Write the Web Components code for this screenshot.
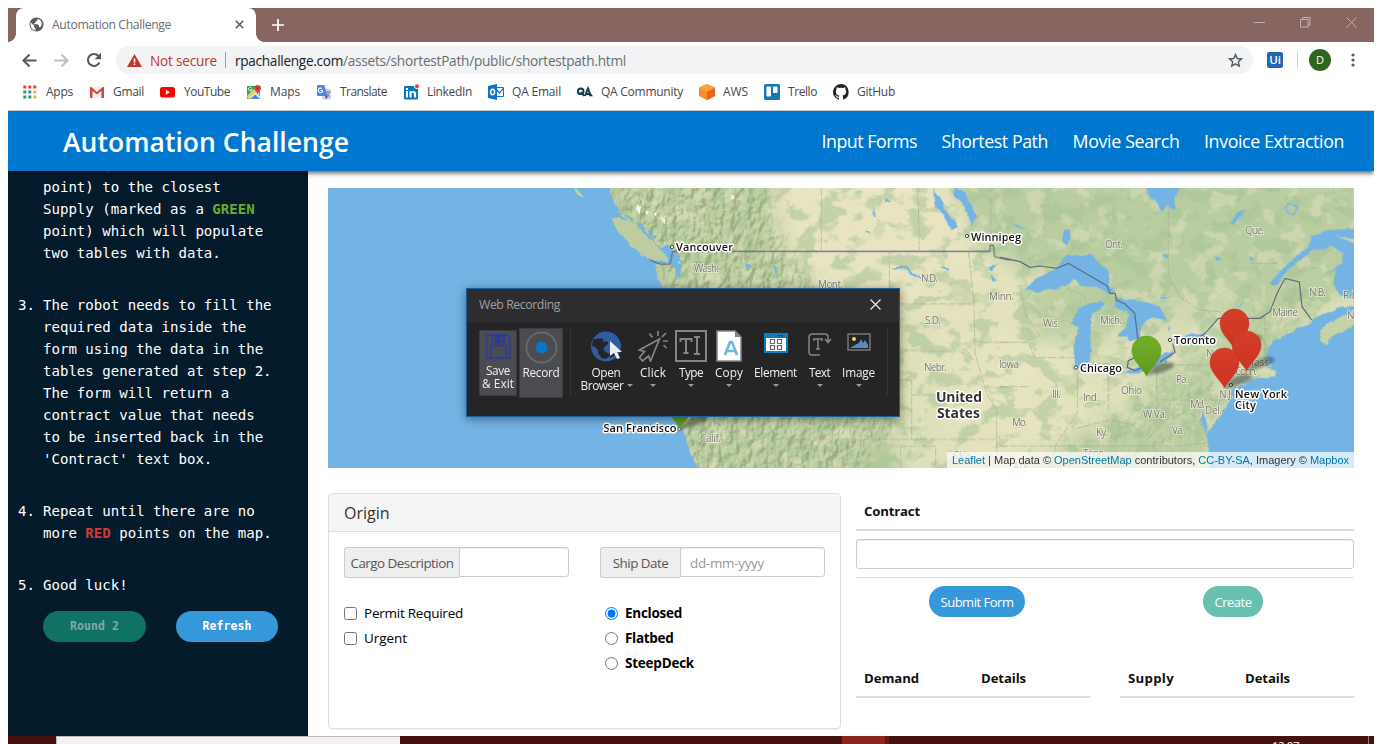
<!DOCTYPE html>
<html lang="en">
<head>
<meta charset="utf-8">
<title>Automation Challenge</title>
<style>
html,body{margin:0;height:744px;overflow:hidden;background:#fff}
body{font-family:"Open Sans","Noto Sans",sans-serif;font-size:13px;color:#000}
</style>
</head>
<body>
<browser-window></browser-window>
<script>
const fitted = [];
function define(name, html) {
  const tpl = document.createElement('template');
  tpl.innerHTML = html;
  customElements.define(name, class extends HTMLElement {
    constructor() {
      super();
      this.attachShadow({mode: 'open'}).appendChild(tpl.content.cloneNode(true));
    }
  });
}

/* A single line of text tracked to a fixed width. */
customElements.define('fit-text', class extends HTMLElement {
  constructor() {
    super();
    this.attachShadow({mode: 'open'}).innerHTML =
      '<style>:host{display:inline-block;white-space:pre;flex:none}</style><span><slot></slot></span>';
    fitted.push(this);
  }
  fit() {
    const w = parseFloat(this.getAttribute('w'));
    const natural = this.shadowRoot.querySelector('span').getBoundingClientRect().width;
    this.style.letterSpacing = ((w - natural) / this.textContent.length) + 'px';
    this.style.width = w + 'px';
  }
});

define('tab-strip', `
<style>
:host{display:flex;height:34px;background:#876560;align-items:stretch;justify-content:space-between}
.left{display:flex}
.tab{display:flex;align-items:center;width:240px;margin-left:8px;background:#fff;border-radius:8px 8px 0 0;color:#6a6d70;font-size:12.200px;box-sizing:border-box;padding:0 0 1px 12px}
.globe{margin-right:8px;margin-left:1px}
.x{margin-left:64px}
.corner{align-self:flex-end;width:8px;height:8px;background:radial-gradient(circle at 100% 0,#876560 7.5px,#fff 8px)}
.cornerl{position:absolute;left:8px;top:34px;width:8px;height:8px;background:radial-gradient(circle at 0 0,#876560 7.5px,#fff 8px)}
.plus{align-self:center;margin-left:8px}
.win{display:flex;gap:35px;padding:9px 17px 0 0}
</style>
<div class="cornerl"></div>
<div class="left">
 <div class="tab">
  <svg class="globe" width="15" height="15" viewBox="0 0 15 15"><circle cx="7.5" cy="7.5" r="7" fill="#56595d"/><path d="M1.5 5.2 5 8.5v1.3l1.5 1.4v2.3C3 13 1.400 10.500 1.500 5.200zM7.500 1.900c1.500.2 1.700.9.800 1.600l-1.900 1.200v1.300H5.200v1.200h3.600l1.200 1.500v1.500h1.200c.8-.9 1.400-1.900 1.500-3.200.1-2.500-1.300-4.300-3.400-5z" fill="#fff"/></svg>
  <fit-text w="119">Automation Challenge</fit-text>
  <svg class="x" width="9" height="9" viewBox="0 0 9 9"><path d="M.8.8l7.400 7.400M8.200.8L.8 8.200" stroke="#5a5d61" stroke-width="1.600"/></svg>
 </div>
 <div class="corner"></div>
 <svg class="plus" width="12" height="12" viewBox="0 0 12 12"><path d="M6 0v12M0 6h12" stroke="#fff" stroke-width="1.700"/></svg>
</div>
<div class="win">
 <svg width="11" height="11"><path d="M0 5.500h11" stroke="#c3b1af"/></svg>
 <svg width="11" height="11"><path d="M.5 2.500h7.500v7.500H.5zM2.500 2.500V.5h7.500V8H8" fill="none" stroke="#c3b1af"/></svg>
 <svg width="11" height="11"><path d="M.5.5l10 10M10.500.5l-10 10" stroke="#c3b1af" fill="none"/></svg>
</div>`);

define('address-bar', `
<style>
:host{display:flex;height:36px;align-items:center;background:#fff;padding-left:14px;box-sizing:border-box}
.nav{margin-right:17px;flex:none}
.pill{display:flex;align-items:center;width:1137px;height:28px;box-sizing:border-box;border-radius:14px;background:#f1f3f4;padding:0 11px;margin-left:-3px;font-size:13.600px;color:#6b6e72}
.bad{color:#c5352d;margin-left:8px}
.rule{width:1px;height:16px;background:#9a9da1;margin:0 9px 0 8px}
.dark{color:#202124}
.star{margin-left:auto;margin-right:-1px}
.ui{width:16px;height:16px;border-radius:2px;background:#2467b0;color:#fff;font-size:11.500px;font-weight:600;line-height:16px;text-align:center;margin-left:14px}
.sep{width:1px;height:16px;background:#ced0d2;margin:0 11px 0 14px}
.avatar{width:22px;height:22px;border-radius:50%;background:#2f661b;color:#fff;text-align:center;font-size:11px;line-height:22px}
.dots{margin-left:20px}
</style>
<svg class="nav" width="15" height="15" viewBox="0 0 15 15"><path d="M14.500 7.500H2M7.500 1.500l-6 6 6 6" fill="none" stroke="#55585c" stroke-width="2"/></svg>
<svg class="nav" width="15" height="15" viewBox="0 0 15 15"><path d="M.5 7.500H13M7.500 1.500l6 6-6 6" fill="none" stroke="#bcbec0" stroke-width="2"/></svg>
<svg class="nav" width="16" height="16" viewBox="0 0 16 16"><path d="M13.400 10.500A6 6 0 1 1 12.500 4" fill="none" stroke="#55585c" stroke-width="2"/><path d="M15 .8v6.400H8.600z" fill="#55585c"/></svg>
<div class="pill">
 <svg width="15" height="13" viewBox="0 0 15 13"><path d="M7.500 0L15 13H0z" fill="#c5352d"/><path d="M7.500 4.500v4M7.500 9.500v1.600" stroke="#fff" stroke-width="1.600"/></svg>
 <fit-text class="bad" w="67">Not secure</fit-text>
 <span class="rule"></span>
 <fit-text class="dark" w="108">rpachallenge.com</fit-text><fit-text w="283">/assets/shortestPath/public/shortestpath.html</fit-text>
 <svg class="star" width="15" height="15" viewBox="0 0 15 15"><path d="M7.500 1.500l1.700 4 4.400.4-3.300 2.900 1 4.300-3.800-2.300-3.800 2.300 1-4.300-3.300-2.900 4.400-.4z" fill="none" stroke="#55585c" stroke-width="1.400"/></svg>
</div>
<div class="ui">Ui</div><div class="sep"></div><div class="avatar">D</div>
<svg class="dots" width="4" height="14"><g fill="#55585c"><circle cx="2" cy="2" r="1.600"/><circle cx="2" cy="7" r="1.600"/><circle cx="2" cy="12" r="1.600"/></g></svg>`);

define('bookmark-item', `
<style>:host{display:flex;align-items:center;gap:8px;color:#45484c;font-size:12px;flex:none}
::slotted(svg){display:block;width:16px;height:16px;flex:none}</style><slot></slot>`);

define('bookmark-bar', `
<style>:host{display:flex;height:33px;box-sizing:border-box;padding:0 0 5px 14px;gap:16px;align-items:center;border-bottom:1px solid #c9ccce;background:#fff}</style>
<bookmark-item><svg viewBox="0 0 16 16"><path d="M1.300 1.500h3v3h-3zM6.300 1.500h3v3h-3zM11.300 1.500h3v3h-3z" fill="#e5432f"/><path d="M1.300 6.500h3v3h-3zM1.300 11.500h3v3h-3zM6.300 11.500h3v3h-3z" fill="#2f9e5b"/><path d="M6.300 6.500h3v3h-3z" fill="#2b85ea"/><path d="M11.300 6.500h3v3h-3zM11.300 11.500h3v3h-3z" fill="#f6b32c"/></svg><fit-text w="27">Apps</fit-text></bookmark-item>
<bookmark-item><svg viewBox="0 0 16 16"><path d="M1 3h14v11H1z" fill="#eee"/><path d="M1 14V3h1.200L8 8l5.800-5H15v11h-2.500V6.800L8 10.500 3.500 6.800V14z" fill="#d6453a"/></svg><fit-text w="31">Gmail</fit-text></bookmark-item>
<bookmark-item><svg viewBox="0 0 16 16"><rect x="0" y="3" width="15" height="10.500" rx="2.500" fill="#f00"/><path d="M5.800 5.800v5l4-2.500z" fill="#fff"/></svg><fit-text w="46">YouTube</fit-text></bookmark-item>
<bookmark-item><svg viewBox="0 0 16 16"><rect x="1" y="2" width="13" height="13" rx="1" fill="#34a45a"/><path d="M2 14.500L12 5l2 8.500-1 1.500z" fill="#dfe3e6"/><path d="M4.500 15L9 10.500l4.500 4.500z" fill="#4285f4"/><path d="M1 12L11 2l2 2L2 15z" fill="#fbd04b"/><path d="M1 2h9L1 11z" fill="#34a45a"/><path d="M6 5.500A1.800 1.800 0 1 1 5.300 3.600M4.500 5.300H6" fill="none" stroke="#fff" stroke-width=".9"/><path d="M11.600 1a3.400 3.400 0 0 1 3.400 3.400c0 2-2.900 3.300-3.400 6.600-.4-3.300-3.400-4.600-3.400-6.600A3.400 3.400 0 0 1 11.600 1z" fill="#df4435"/><circle cx="11.600" cy="4.300" r="1.100" fill="#8c211b"/></svg><fit-text w="30">Maps</fit-text></bookmark-item>
<bookmark-item><svg viewBox="0 0 16 16"><rect x="6" y="5" width="9" height="10.500" rx="1" fill="#d2d5da"/><path d="M1.500 1h6.800l3.200 11H2a1 1 0 0 1-1-1V1.500z" fill="#4a86e2"/><path d="M9 12h3l-2 3.500z" fill="#3463b8"/><path d="M6.800 6.800A2.300 2.300 0 1 1 6 4.600M4.600 6.600h2.200" fill="none" stroke="#fff" stroke-width="1.100"/><path d="M9.800 8h4.500M12 7v1M13.500 8c-.5 2-1.500 3.500-2.300 4M10.800 9.500l3 3.500" stroke="#778088" fill="none"/></svg><fit-text w="47">Translate</fit-text></bookmark-item>
<bookmark-item><svg viewBox="0 0 16 16"><rect x="1" y="2" width="14" height="13.500" rx="1" fill="#0877b5"/><path d="M3 7h2v6.500H3zM3 4h2v2H3zM6.500 7h2v1c1.300-1.800 4.600-1.500 4.600 1.600v3.900H11V10c0-1.800-2.400-1.700-2.400 0v3.500H6.500z" fill="#fff"/><circle cx="14" cy="2.200" r="2.700" fill="#fff"/><circle cx="14" cy="2.200" r="2" fill="#e8403a"/></svg><fit-text w="45">LinkedIn</fit-text></bookmark-item>
<bookmark-item><svg viewBox="0 0 16 16"><path d="M0 2l9-2v16l-9-2z" fill="#0b70c9"/><path d="M9 3.500h6.500v9H9" fill="#fff" stroke="#0b70c9"/><path d="M9 6l2.500 3L15 4.500" fill="none" stroke="#0b70c9" stroke-width="1.200"/><ellipse cx="4.600" cy="8" rx="2" ry="2.700" fill="none" stroke="#fff" stroke-width="1.500"/></svg><fit-text w="49">QA Email</fit-text></bookmark-item>
<bookmark-item><svg viewBox="0 0 16 16"><circle cx="3.700" cy="7.300" r="2.800" fill="none" stroke="#123e50" stroke-width="2"/><path d="M4 8l3 4M8 12l3-7.500 2.300 6M9 10h5" fill="none" stroke="#123e50" stroke-width="2"/><path d="M12.500 7.500l3.500 4.700h-4z" fill="#123e50"/></svg><fit-text w="82">QA Community</fit-text></bookmark-item>
<bookmark-item><svg viewBox="0 0 16 16"><path d="M8 0l8 3.500v8.500L8 16l-8-4V3.500z" fill="#f68d2a"/><path d="M8 7.500l8-4V12l-8 4z" fill="#e9641f"/><path d="M0 3.500L8 0l8 3.500-8 4z" fill="#fba23e"/></svg><fit-text w="25">AWS</fit-text></bookmark-item>
<bookmark-item><svg viewBox="0 0 16 16"><rect width="16" height="16" rx="1.500" fill="#1577b4"/><rect x="2.400" y="2.400" width="4.600" height="10" rx=".8" fill="#fff"/><rect x="9" y="2.400" width="4.600" height="6.700" rx=".8" fill="#fff"/></svg><fit-text w="29">Trello</fit-text></bookmark-item>
<bookmark-item><svg viewBox="0 0 16 16"><path fill="#20242a" d="M8 0a8 8 0 0 0-2.500 15.600c.4.100.5-.2.500-.4v-1.500c-2.200.5-2.700-1-2.700-1-.4-.9-.9-1.200-.9-1.200-.7-.5.100-.5.100-.5.800.1 1.200.8 1.200.8.700 1.300 1.900.9 2.300.7.100-.5.300-.9.500-1.100-1.800-.2-3.600-.9-3.600-4 0-.9.300-1.600.8-2.100-.1-.2-.4-1 .1-2.100 0 0 .7-.2 2.200.8a7.600 7.600 0 0 1 4 0c1.500-1 2.200-.8 2.200-.8.4 1.100.2 1.900.1 2.100.5.600.8 1.300.8 2.100 0 3.100-1.900 3.700-3.700 3.900.3.300.6.800.6 1.500v2.200c0 .2.100.5.600.4A8 8 0 0 0 8 0z"/></svg><fit-text w="38">GitHub</fit-text></bookmark-item>`);

define('site-header', `
<style>
:host{display:flex;height:60px;background:#0077cf;color:#fff;align-items:center;justify-content:space-between;padding:0 30px 0 55px;box-shadow:0 2px 5px rgba(0,0,0,.65);position:relative;z-index:2;clip-path:inset(0 0 -10px 0)}
h1{margin:0;font-size:26.500px;font-weight:600;line-height:60px;padding-top:1px}
nav{display:flex;gap:24.500px;font-size:17.800px}
</style>
<h1><fit-text w="286">Automation Challenge</fit-text></h1>
<nav><fit-text w="95.500">Input Forms</fit-text><fit-text w="106.500">Shortest Path</fit-text><fit-text w="107">Movie Search</fit-text><fit-text w="140">Invoice Extraction</fit-text></nav>`);

define('round-button', `
<style>:host{display:flex;align-items:center;justify-content:center;height:31px;border-radius:16px;background:var(--bg,#3498db);color:var(--fg,#fff);flex:none;box-sizing:border-box}</style><slot></slot>`);

define('step-item', `
<style>:host{display:grid;grid-template-columns:25px 1fr;line-height:22px;margin-bottom:30px}
.b{white-space:pre}</style><div><slot name="n"></slot></div><div class="b"><slot></slot></div>`);

define('instruction-panel', `
<style>
:host{display:block;width:300px;box-sizing:border-box;padding-left:10px;background:#041b2c;color:#fff;font:14.070px "DejaVu Sans Mono","Liberation Mono",monospace;overflow:hidden;flex:none}
.list{margin-top:-17px}
b{line-height:1}
b.g{color:#6bac26}b.r{color:#d53a31}
.btns{display:flex;gap:30px;margin:-15.500px 0 0 25px;font-size:11.500px;font-weight:700}
</style>
<div class="list">
<step-item><span slot="n"></span>Demand (marked as a RED
point) to the closest
Supply (marked as a <b class="g">GREEN</b>
point) which will populate
two tables with data.</step-item>
<step-item><span slot="n">3.</span>The robot needs to fill the
required data inside the
form using the data in the
tables generated at step 2.
The form will return a
contract value that needs
to be inserted back in the
'Contract' text box.</step-item>
<step-item><span slot="n">4.</span>Repeat until there are no
more <b class="r">RED</b> points on the map.</step-item>
<step-item><span slot="n">5.</span>Good luck!</step-item>
<div class="btns"><round-button style="width:103px;--bg:#107264;--fg:#85a9a8"><fit-text w="49">Round 2</fit-text></round-button><round-button style="width:102px"><fit-text w="49">Refresh</fit-text></round-button></div>
</div>`);

define('route-map', `
<style>
:host{display:block;width:1026px;height:280px;position:relative;overflow:hidden;background:#73b4e5}
svg{display:block}
.lake{fill:#73b4e5}
.state{fill:none;stroke:#a5ab98;stroke-width:2.500;stroke-dasharray:24 5;opacity:.75}
.edge{fill:none;stroke:#626c76;stroke-width:3.600}
.s{fill:#7e7b76;stroke:#eeefdc;stroke-width:2px;stroke-opacity:.65;paint-order:stroke;font-size:10px}
.c{fill:#111;stroke:#fff;stroke-width:3px;paint-order:stroke;font-size:11px;font-weight:600;stroke-linejoin:round}
.big{font-size:14px;font-weight:700;fill:#333}
.attr{position:absolute;right:0;bottom:0;height:16px;width:407px;box-sizing:border-box;padding-left:5px;background:rgba(255,255,255,.7);font:11px/16px "Liberation Sans",Arial,sans-serif;color:#333;white-space:pre}
.attr i{font-style:normal;color:#0078a8}
</style>
<svg width="1026" height="280" viewBox="0 0 1026 280" font-family="'Open Sans','Noto Sans',sans-serif">
<defs>
 <filter id="patch" x="0" y="0" width="100%" height="100%" color-interpolation-filters="sRGB"><feTurbulence type="fractalNoise" baseFrequency=".045 .06" numOctaves="4" seed="8"/><feColorMatrix values="0 0 0 0 .66  0 0 0 0 .77  0 0 0 0 .59  9 0 0 0 -4.500"/></filter>
 <filter id="patch2" x="0" y="0" width="100%" height="100%" color-interpolation-filters="sRGB"><feTurbulence type="fractalNoise" baseFrequency=".05" numOctaves="4" seed="31"/><feColorMatrix values="0 0 0 0 .91  0 0 0 0 .89  0 0 0 0 .76  9 0 0 0 -5"/></filter>
 <filter id="shade" x="0" y="0" width="100%" height="100%" color-interpolation-filters="sRGB"><feTurbulence type="fractalNoise" baseFrequency=".13 .09" numOctaves="3" seed="4"/><feDiffuseLighting surfaceScale="4" lighting-color="#fff"><feDistantLight azimuth="225" elevation="48"/></feDiffuseLighting><feColorMatrix values="0 0 0 0 .5  0 0 0 0 .56  0 0 0 0 .38  -2.200 0 0 0 1.560"/></filter>
 <filter id="shine" x="0" y="0" width="100%" height="100%" color-interpolation-filters="sRGB"><feTurbulence type="fractalNoise" baseFrequency=".13 .09" numOctaves="3" seed="4"/><feDiffuseLighting surfaceScale="4" lighting-color="#fff"><feDistantLight azimuth="225" elevation="48"/></feDiffuseLighting><feColorMatrix values="0 0 0 0 .93  0 0 0 0 .92  0 0 0 0 .79  4 0 0 0 -3.100"/></filter>
 <filter id="soft" x="-20%" y="-20%" width="140%" height="140%"><feGaussianBlur stdDeviation="9"/></filter>
 <filter id="rough" x="-5%" y="-5%" width="110%" height="110%"><feTurbulence type="fractalNoise" baseFrequency=".12" numOctaves="2" seed="2"/><feDisplacementMap in="SourceGraphic" scale="5" xChannelSelector="R" yChannelSelector="G"/></filter>
 <filter id="blur2" x="-50%" y="-50%" width="200%" height="200%"><feGaussianBlur stdDeviation="1.500"/></filter>
 <mask id="hills"><g filter="url(#soft)" fill="#fff"><path d="M270-20H430L455 60 500 110 560 160 570 230 520 300H340L330 90z"/><path d="M820 300L770 250 860 190 920 130 990 90 980 130 900 190 880 240z" opacity=".3"/></g></mask>
 <linearGradient id="gr" x2="0" y2="1"><stop offset="0" stop-color="#72af28"/><stop offset="1" stop-color="#5f9a1c"/></linearGradient>
 <linearGradient id="rd" x2="0" y2="1"><stop offset="0" stop-color="#d63e2a"/><stop offset="1" stop-color="#cb3422"/></linearGradient>
 <path id="pin" d="M0 0C-3-7-14.500-15-14.500-25.500a14.500 14.500 0 0 1 29 0C14.500-15 3-7 0 0z"/>
 <path id="sh" d="M0 0C4-9 18-17 27-13 32-8 14-3 0 0z" fill="#222" opacity=".42" filter="url(#blur2)"/>
</defs>
<rect width="1026" height="280" fill="#dde0ba"/>
<g filter="url(#soft)">
 <path d="M260-20H430L470 60 500 130 480 190 560 210 580 300H340z" fill="#b9cc9f"/>
 <path d="M435-10H620L660 50 700 70 690 200 640 170 560 100 470 90z" fill="#e8e4c1"/>
 <path d="M600 80H700V290H620z" fill="#e3e2bd"/>
 <path d="M620-10H1040V100L890 130 760 150 730 100 650 60z" fill="#b9cda1"/>
 <path d="M670 150L740 170 760 240 690 250 650 200z" fill="#e7e4c1"/>
 <path d="M700 100H750V150H700zM770 230L890 150 1000 60 1000 110 890 230 880 290 700 290z" fill="#bccfa2"/>
 <path d="M800 140L850 130 900 110 905 100 840 120 800 150M700 195H800V225H700z" fill="#e2e2bb"/>
</g>
<rect width="1026" height="280" filter="url(#patch)" opacity=".55"/>
<rect width="1026" height="280" filter="url(#patch2)" opacity=".45"/>
<g mask="url(#hills)"><rect width="1026" height="280" filter="url(#shade)" opacity=".5"/><rect width="1026" height="280" filter="url(#shine)" opacity=".4"/></g>
<g fill="#f6f7f2" filter="url(#rough)"><path d="M309 17l5 3-1 5-5-2zM327 24l3 3-2 3zM335 29l4 4-3 2zM402 5l5 3-3 2zM317 21l3 2-2 3z"/></g>
<g filter="url(#rough)">
 <path class="lake" d="M-10-10H277L286 14 291 25 302 34 317 42 325 52 333 60 341 57 347 66 352 78 351 92 347 80 342 75 327 75 330 90 336 104 330 180 340 226 352 240 358 252 363 265 374 290H-10z"/>
 <path d="M284 32L290 29 306 35 320 50 330 58 340 70 340 75 328 72 314 67 303 58 290 44z" fill="#bdcda1"/>
 <path d="M245-2L255 9 251 8 243-2z" fill="#c9d5a8"/>
 <path d="M321 42l7 8M310 35l7 7M297 27l7 5M345 64l8 9" fill="none" stroke="#73b4e5" stroke-width="2.500"/>
 <g transform="translate(332 -8) scale(.33333)" class="lake">
  <path d="M885 18L920 40 935 80 950 110 937 144 927 112 905 62 880 45zM820 18L835 50 860 90 897 145 873 150 850 105 822 70zM672 55l20 6-20 6zM615 152l12 2-2 8zM985 262l28-10-20 20zM990 280l18 20-10 10zM258 250l15 5-12 20zM340 262l8 0 0 25-6-6zM170 730l14 4-8 8z"/>
  <path d="M700 266l42-8 10 24 34 10M850 262l16 4M640 90l5 20" fill="none" stroke="#73b4e5" stroke-width="6"/>
 </g>
 <g transform="translate(672 -8) scale(.33333)" class="lake">
  <path d="M430 10L455 55 492 98 500 75 525 92 520 60 542 15z"/>
  <path d="M75 330L110 292 165 268 200 228 272 225 325 272 330 320 345 338 320 340 285 320 245 318 225 300 170 325 120 337z"/>
  <path d="M240 382L300 362 318 372 275 402 275 440 270 540 255 572 225 558 220 500 236 440 214 428z"/>
  <path d="M345 355L430 362 485 382 497 422 460 408 430 432 416 478 395 482 380 470 352 470 378 440 385 400 345 376z"/>
  <path d="M372 576L405 562 470 530 527 512 500 540 450 572 400 585z"/>
  <path d="M518 478L570 462 622 464 600 482 540 488z"/>
  <path d="M482 347l28 4-26 5zM190 150l18-2 4 25-12 20-10-10zM690 130l22-34 22-4-34 45zM645 232l20-4-10 14zM750 230l22 14-18-2zM40 135l40 8-34 2zM490 225l14 0-6 12zM735 350l-20 30 5 0zM500 438l10 0-2 20z"/>
  <path d="M810 314L850 262 892 225 925 200 935 165 985 150 1075 146V362L1035 352 1010 335 1000 305 1008 268 966 286 1024 252 1030 218 990 200 940 212 890 246 855 280 822 318z"/>
  <path d="M1075 380L1020 380 985 396 940 415 932 432 900 442 870 458 820 482 802 510 795 540 810 566 830 574 824 590 780 592 720 608 694 630 690 664 640 732 622 762 622 792 630 880H1075z"/>
  <path d="M607 695l12 30 2 45-10-20-8-30zM655 665l8 20-8-5z"/>
  <path d="M1075 385L1030 406 985 430 960 452 962 478 982 494 1000 470 1040 448 1075 425zM1005 165L1075 180V195z" style="fill:#c6d2a8"/>
  <path d="M704 628L755 603 715 612z" style="fill:#c9d3a8"/>
  <circle cx="874" cy="88" r="15" style="fill:none" stroke="#73b4e5" stroke-width="5"/>
 </g>
</g>
<g transform="translate(332 -8) scale(.33333)">
 <path class="edge" d="M-30 240L0 252 30 252 38 214H990V196h10l4 34 46 10"/>
 <path class="state" d="M484 24V214M774 24L778 214M688 214V325M992 24V195M245 214V325M720 372H940M720 510L900 515 945 540M925 214L935 300 942 370 945 520 980 640 1010 690V862M945 487H1050M755 645H960M720 600H755V778M345 778H1010M345 778V862M517 710V862M722 862V799H827V862M980 622H1050"/>
</g>
<g transform="translate(672 -8) scale(.33333)">
 <path class="edge" d="M0 232L30 238 60 245 90 262 120 258 170 265 205 250 322 318 330 340 345 340 350 360 375 372 404 400 414 480M410 530L385 542 382 562 405 572 440 555 M480 545L525 517 518 490M595 475L620 455 655 415H780L810 395 832 338 855 295 898 306 906 380 935 420" />
 <path class="state" d="M505 90V290L545 355 600 390 660 395M65 340L75 400 120 470M0 487H85L105 533H225M0 620H90M232 575V700L170 790 150 864M325 555V690M250 550H325M470 555H650M470 555V660H660M470 660L400 735 330 720 230 745M0 798H540L620 790M750 250H830M795 415V545M730 555H790M200 325L250 345 260 370M900 275L950 262M400 735L440 780 560 660M570 700L610 720"/>
</g>
<g class="s">
 <text x="366" y="83.500" textLength="25">Wash.</text><text x="490" y="99.500" textLength="25">Mont.</text><text x="593" y="93.500" textLength="17">N.D.</text><text x="597" y="136" textLength="16">S.D.</text><text x="596" y="183" textLength="23">Nebr.</text><text x="661" y="112" textLength="25">Minn.</text><text x="671" y="179.500" textLength="20">Iowa</text><text x="372" y="253.500" textLength="21">Calif.</text><text x="625" y="270.500" textLength="19">Okla.</text>
 <text x="777" y="59.500" textLength="18">Ont.</text><text x="917" y="46" textLength="19">Que.</text><text x="715" y="138.500" textLength="17">Wis.</text><text x="772" y="135.500" textLength="22">Mich.</text><text x="981" y="107.500" textLength="17">N.B.</text><text x="1015" y="111">P.E.I.</text><text x="1019" y="131">N.S.</text><text x="944" y="127.500" textLength="26">Maine</text><text x="724" y="209.500" textLength="9">Ill.</text><text x="755" y="213" textLength="16">Ind.</text><text x="793" y="205.500" textLength="21">Ohio</text><text x="848" y="195" textLength="12">Pa.</text><text x="862" y="219.500" textLength="15">Md.</text><text x="877" y="226" textLength="17">Del.</text><text x="891" y="210" textLength="14">N.J.</text><text x="815" y="229.500" textLength="24">W.Va.</text><text x="844" y="245.500" textLength="12">Va.</text><text x="684" y="237.500" textLength="15">Mo.</text><text x="768" y="247.500" textLength="12">Ky.</text><text x="755" y="269" textLength="23">Tenn.</text><text x="685" y="282">Ark.</text><text x="878" y="169">N.Y.</text><text x="917" y="177.500">Mass.</text><text x="907" y="187" textLength="22">Conn.</text>
</g>
<g class="c">
 <text x="348" y="62.500" textLength="57">Vancouver</text><text x="643" y="52.500" textLength="50">Winnipeg</text><text x="846" y="155.500" textLength="42">Toronto</text><text x="752" y="183.500" textLength="42">Chicago</text><text x="275.500" y="243.500" textLength="73">San Francisco</text><text x="907" y="209.500" textLength="52">New York</text><text x="907" y="221" textLength="21">City</text>
 <text class="big" x="608" y="214" textLength="46">United</text><text class="big" x="609" y="230" textLength="43">States</text>
</g>
<g fill="#fff" stroke="#444"><circle cx="344" cy="59" r="1.600"/><circle cx="639" cy="48" r="1.600"/><circle cx="842" cy="152" r="1.600"/><circle cx="748" cy="179.500" r="1.600"/><circle cx="351.500" cy="241" r="1.600"/><circle cx="903" cy="197" r="1.600"/></g>
<g transform="translate(352 241)"><use href="#sh"/><use href="#pin" fill="url(#gr)"/></g>
<g transform="translate(818.500 188)"><use href="#sh"/><use href="#pin" fill="url(#gr)" stroke="#659a25" stroke-width=".7"/></g>
<g stroke="#b83325" stroke-width=".5">
 <g transform="translate(906.500 161)"><use href="#sh" stroke="none"/><use href="#pin" fill="url(#rd)"/></g>
 <g transform="translate(918.500 183)"><use href="#sh" stroke="none"/><use href="#pin" fill="url(#rd)"/></g>
 <g transform="translate(896.500 200)"><use href="#sh" stroke="none"/><use href="#pin" fill="url(#rd)"/></g>
</g>
</svg>
<div class="attr"><fit-text w="397"><i>Leaflet</i> | Map data © <i>OpenStreetMap</i> contributors, <i>CC-BY-SA</i>, Imagery © <i>Mapbox</i></fit-text></div>`);

define('field-group', `
<style>
:host{display:flex;align-items:flex-start;font-size:13.400px}
.l{display:flex;align-items:center;justify-content:center;height:31px;box-sizing:border-box;background:#eee;border:1px solid #ccc;border-right:0;border-radius:3px 0 0 3px;color:#555;width:var(--lw);padding-top:1px}
.i{flex:1;height:30px;box-sizing:border-box;border:1px solid #ccc;border-radius:0 3px 3px 0;box-shadow:inset 0 1px 1px rgba(0,0,0,.08);padding:5px 9px 0;color:#999;line-height:20px}
</style><div class="l"><slot></slot></div><div class="i"><slot name="value"></slot></div>`);

define('choice-row', `
<style>:host{display:flex;align-items:center;height:25px;gap:7px;font-size:13.500px}
::slotted(:not(input)){margin-top:-2px}
::slotted(input){margin:0;width:13px;height:13px}</style><slot></slot>`);

define('origin-card', `
<style>
:host{display:block;width:513px;height:236px;box-sizing:border-box;border:1px solid #ddd;border-radius:4px;overflow:hidden;box-shadow:0 1px 1px rgba(0,0,0,.05)}
header{height:37px;border-bottom:1px solid #ddd;background:#f5f5f5;font-size:16px;color:#333;padding-left:15px;line-height:38px;font-weight:500}
.body{display:grid;grid-template-columns:225px 225px;column-gap:31px;padding:15px 15px 0}
.c{margin-top:23px}
b{font-weight:700}
</style>
<header><fit-text w="45.500">Origin</fit-text></header>
<div class="body">
 <field-group style="--lw:115px"><fit-text w="103">Cargo Description</fit-text></field-group>
 <field-group style="--lw:80px"><fit-text w="55.500">Ship Date</fit-text><fit-text slot="value" w="74">dd-mm-yyyy</fit-text></field-group>
 <div class="c"><choice-row><input type="checkbox"><fit-text w="99">Permit Required</fit-text></choice-row><choice-row><input type="checkbox"><fit-text w="43">Urgent</fit-text></choice-row></div>
 <div class="c" style="padding-left:5px"><choice-row><input type="radio" checked><b><fit-text w="57">Enclosed</fit-text></b></choice-row><choice-row><input type="radio"><b><fit-text w="48.500">Flatbed</fit-text></b></choice-row><choice-row><input type="radio"><b><fit-text w="69">SteepDeck</fit-text></b></choice-row></div>
</div>`);

define('contract-panel', `
<style>
:host{display:block;width:498px;font-size:13.200px}
.h{display:grid;height:36px;align-items:center;font-weight:700;border-bottom:2px solid #ddd;padding:0 0 2px 8px;box-sizing:border-box;color:#111}
.in{height:30px;box-sizing:border-box;border:1px solid #ccc;border-radius:3px;margin:8px 0;box-shadow:inset 0 1px 1px rgba(0,0,0,.08)}
.btns{display:grid;grid-template-columns:242px 1fr;border-top:1px solid #ddd;padding-top:8px;justify-items:center;font-size:13px}
.tables{display:grid;grid-template-columns:1fr 1fr;gap:30px;margin-top:45px}
.two{grid-template-columns:117px 1fr}
round-button{padding-top:1px}
</style>
<div class="h" style="height:38px;padding-bottom:1px"><fit-text w="56">Contract</fit-text></div>
<div class="in"></div>
<div class="btns"><round-button style="width:96px"><fit-text w="73">Submit Form</fit-text></round-button><round-button style="width:60px;--bg:#68c0b0;--fg:#f4fffc;margin-left:14px"><fit-text w="37">Create</fit-text></round-button></div>
<div class="tables"><div class="h two"><fit-text w="55">Demand</fit-text><fit-text w="45">Details</fit-text></div><div class="h two"><fit-text w="46">Supply</fit-text><fit-text w="45">Details</fit-text></div></div>`);

define('tool-button', `
<style>
:host{display:flex;flex-direction:column;align-items:center;width:var(--w);flex:none;color:#f0f0f0;font-size:11.800px;line-height:13px;text-align:center;box-sizing:border-box}
.ic{height:var(--ih,38px);display:block}
.arrow{width:0;height:0;border:3px solid transparent;border-top-color:#9a9a9a;border-bottom:0;margin-top:5px}
:host([plain]) .arrow{display:none}
::slotted(svg){display:block}
</style><div class="ic"><slot name="icon"></slot></div><slot></slot><div class="arrow"></div>`);

define('recording-window', `
<style>
:host{position:absolute;left:466px;top:288px;width:434px;height:129px;box-sizing:border-box;border:1px solid #185f9e;background:#252526;box-shadow:0 2px 9px rgba(0,0,0,.45);z-index:3}
.bar{display:flex;height:33px;background:#2d2d30;align-items:center;justify-content:space-between;padding:0 18px 0 12px;color:#a0a0a0;font-size:12.200px}
.bar fit-text{margin-top:-2px}
.tools{display:flex;align-items:flex-start;padding:6px 0 0 12px}
.box{background:#4b4b52;border:1px solid #3b3b40}
.sep{width:1px;height:67px;background:#37373a}
.row{display:flex;align-items:center;gap:3px;margin-right:-1px}
.row i{width:0;height:0;border:3px solid transparent;border-top-color:#9a9a9a;border-bottom:0}
</style>
<div class="bar"><fit-text w="81">Web Recording</fit-text><svg width="11" height="11" style="margin-top:-3px"><path d="M.5.5l10 10M10.500.5l-10 10" stroke="#eee" stroke-width="1.200"/></svg></div>
<div class="tools">
 <tool-button plain class="box" style="--w:38px;height:66px;margin:2px 2px 0 0;--ih:33px"><svg slot="icon" style="margin-top:3px" width="25" height="25" viewBox="0 0 25 25"><g fill="none" stroke="#2a3b96" stroke-width="1.300"><path d="M1 1h20l3 3v20H1zM4.500 24V11.500h16V24M6.500 1v7.500h12V1"/></g><path d="M9 1h9v7H9z" fill="#2a3b96"/><path d="M14.500 2.500h2v4h-2z" fill="#4b4b52"/></svg><fit-text w="24">Save</fit-text><fit-text w="32">&amp; Exit</fit-text></tool-button>
 <tool-button plain class="box" style="--w:44px;height:70px;--ih:37px"><svg slot="icon" style="margin-top:2px" width="33" height="33"><circle cx="16.500" cy="16.500" r="15" fill="none" stroke="#68686a" stroke-width="2"/><circle cx="16.500" cy="16.500" r="6" fill="#0b76c5"/></svg><fit-text w="37">Record</fit-text></tool-button>
 <div class="sep" style="margin:0 7px 0 7px"></div>
 <tool-button plain style="--w:56px"><svg slot="icon" style="margin-top:3px" width="33" height="32" viewBox="0 0 33 32"><circle cx="16" cy="15.500" r="15" fill="#305d9f"/><path d="M3 9c2-2 4 0 5-2 2 2 4-1 5 1 1 1-1 2 1 3 2-2 4-1 4 1 0 3-5 3-4 7 1 2 4 2 5 5 1 2-2 3-4 4l-4-1c0-3-4-4-3-8-2-2-4-4-6-4zM22 20l5-1-3 6-4 2-1-4z" fill="#252526"/><path d="M20 10l12 11h-5l3 6-3 1-3-6-4 3z" fill="#eee"/></svg><fit-text w="29">Open</fit-text><div class="row"><fit-text w="43">Browser</fit-text><i></i></div></tool-button>
 <tool-button style="--w:38px"><svg slot="icon" style="margin-top:2px" width="30" height="32" viewBox="0 0 30 32"><path d="M21.500 9L1.500 20l5 1.500-5 6 3 3.500 6-5 2 5z" fill="none" stroke="#858588" stroke-width="1.700"/><path d="M20 1v5M11.500 3.500l3 4M28 3l-4 4M25 11h5M25.500 15l3 3" stroke="#858588" stroke-width="1.700"/></svg><fit-text w="26">Click</fit-text></tool-button>
 <tool-button style="--w:38px"><svg slot="icon" style="margin-top:2px" width="32" height="32" viewBox="0 0 32 32"><path d="M1 1h30v30H1zM5.500 12V9h11v3M11 9v14M8.500 23h5M19 7h6M22 7v17M19 24h6" fill="none" stroke="#858588" stroke-width="2"/></svg><fit-text w="24">Type</fit-text></tool-button>
 <tool-button style="--w:38px"><svg slot="icon" style="margin-top:2px" width="26" height="32" viewBox="0 0 26 32"><path d="M1 1h18l6 6v24H1z" fill="#fff" stroke="#858588" stroke-width="1.500"/><path d="M19 1v6h6z" fill="#858588"/><path d="M9 25l5-13h2l5 13M11 21h8" fill="none" stroke="#6cb7df" stroke-width="2.600"/></svg><fit-text w="28">Copy</fit-text></tool-button>
 <tool-button style="--w:55px"><svg slot="icon" style="margin-top:5px" width="24" height="20" viewBox="0 0 24 20"><path d="M0 0h24v20H0z" fill="#0a7cc0"/><path d="M2 5h20v13H2z" fill="#fff"/><path d="M6.500 6.500h4v4h-4zM13.500 6.500h4v4h-4zM6.500 12.500h4v4h-4zM13.500 12.500h4v4h-4z" fill="none" stroke="#68686c" stroke-width="1.200"/><path d="M14 2h2v1.500h-2zM17 2h2v1.500h-2z" fill="#173d5b"/><path d="M20 2h2v1.500h-2z" fill="#b64657"/></svg><fit-text w="43">Element</fit-text></tool-button>
 <tool-button style="--w:33px"><svg slot="icon" style="margin-top:5px" width="24" height="24" viewBox="0 0 24 24"><path d="M12 22H4a3 3 0 0 1-3-3V4a3 3 0 0 1 3-3h13q3 0 3 3v5M17 6l3 3.500L23 6M6 8V6h8v2M10 6v10M8 16h4" fill="none" stroke="#858588" stroke-width="1.500"/></svg><fit-text w="21">Text</fit-text></tool-button>
 <tool-button style="--w:45px"><svg slot="icon" style="margin-top:5px" width="24" height="18" viewBox="0 0 24 18"><path d="M1 1h22v16H1z" fill="none" stroke="#77777a" stroke-width="1.500"/><path d="M3 15l5-3 4-2 2-4 2 4 2-3 3 5v3z" fill="#568ac9"/><circle cx="7" cy="6" r="2" fill="#f4d65c"/></svg><fit-text w="33">Image</fit-text></tool-button>
 <div class="sep" style="margin-left:6px"></div>
</div>`);

define('task-bar', `
<style>
:host{display:flex;height:8px;background:#46120f;overflow:hidden}
.search{margin-left:48px;width:344px;box-sizing:border-box;background:#f3f0ef;border-top:1px solid #bcb8b7;border-left:1px solid #bcb8b7}
.act{margin-left:442px;width:43px;background:#8b251d;border-right:4px solid #65190f}
.clock{margin-left:383px;color:#fff;font-size:11.500px;line-height:14px;padding-top:3px}
.end{margin-left:69px;width:1px;background:#958280}
</style><div class="search"></div><div class="act"></div><div class="clock"><fit-text w="27">12:07</fit-text></div><div class="end"></div>`);

define('browser-window', `
<style>
:host{display:block;height:744px;width:1382px;box-sizing:border-box;padding:8px 8px 0;overflow:hidden;position:relative}
.page{display:flex;height:565px}
main{padding:17px 20px 0;width:1026px}
.row{display:flex;gap:15px;margin-top:25px}
</style>
<tab-strip></tab-strip><address-bar></address-bar><bookmark-bar></bookmark-bar>
<site-header></site-header>
<div class="page"><instruction-panel></instruction-panel><main><route-map></route-map><div class="row"><origin-card></origin-card><contract-panel></contract-panel></div></main></div>
<task-bar></task-bar>
<recording-window></recording-window>`);

fitted.forEach(el => { if (el.isConnected) el.fit(); });
</script>
</body>
</html>
